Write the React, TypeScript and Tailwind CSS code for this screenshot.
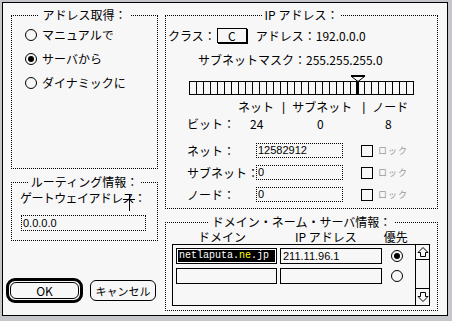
import type { ReactNode } from "react";

const bg = "bg-[#f7f7f7]";

function Radio({ on }: { on?: boolean }) {
  return (
    <span className="flex h-[12px] w-[12px] shrink-0 items-center justify-center rounded-full border border-black bg-[#f7f7f7]">
      {on && <span className="h-[6px] w-[6px] rounded-full bg-black" />}
    </span>
  );
}

function Group({
  title,
  className,
  children,
}: {
  title: string;
  className?: string;
  children?: ReactNode;
}) {
  return (
    <div className={`border border-dotted border-black ${className ?? ""}`}>
      <div className="-mt-[8px] flex h-[14px] justify-center">
        <span className={`${bg} px-[3px] text-[12px] leading-[14px]`}>{title}</span>
      </div>
      {children}
    </div>
  );
}

function Slider() {
  const lines = Array.from({ length: 33 }, (_, i) => 1 + i * 7);
  return (
    <svg width="227" height="24" viewBox="0 0 227 24">
      <rect x="1" y="10" width="225" height="14" fill="#f7f7f7" />
      {lines.map((x) => (
        <rect key={x} x={x} y="10" width="1" height="14" fill="#000" />
      ))}
      <rect x="1" y="10" width="225" height="1" fill="#000" />
      <rect x="1" y="23" width="225" height="1" fill="#000" />
      <rect x="168" y="8" width="3" height="16" fill="#000" />
      <path d="M163.5 5.5 H176.5 L170 10.5 Z" fill="#f7f7f7" stroke="#000" />
      <rect x="163" y="4" width="14" height="2" fill="#000" />
    </svg>
  );
}

function Arrow({ down }: { down?: boolean }) {
  return (
    <svg width="12" height="12" viewBox="0 0 12 12" className={down ? "rotate-180" : ""}>
      <path d="M6 1.5 L11 6.5 H8.5 V10.5 H3.5 V6.5 H1 Z" fill="#f7f7f7" stroke="#000" />
    </svg>
  );
}

function FieldRow({ label, value }: { label: string; value: string }) {
  return (
    <div className="flex h-[15px] items-center pl-[21px]">
      <span className="w-[69px] whitespace-nowrap text-[12px] leading-[14px]">{label}</span>
      <span className="flex h-[15px] w-[87px] items-center border border-dotted border-black pl-[1px] font-['Liberation_Sans',sans-serif] text-[11px] leading-[13px]">
        {value}
      </span>
      <span className="ml-[18px] h-[12px] w-[12px] border border-black" />
      <span className="ml-[5px] text-[9px] leading-[12px] tracking-[1px] text-[#9a9a9a]">ロック</span>
    </div>
  );
}

export default function App() {
  return (
    <div className="h-[321px] w-[452px] overflow-hidden bg-[#c4c6ca] pl-[2px] pt-[2px] font-['Noto_Sans_CJK_JP','Noto_Sans',sans-serif] text-black">
      <div className={`flex h-[314px] w-[446px] gap-[7px] border border-black ${bg} pl-[8px]`}>
        {/* left column */}
        <div className="flex w-[147px] flex-col pt-[12px]">
          <Group title="アドレス取得：" className="h-[154px]">
            <div className="mt-[6px] flex flex-col gap-[10px] pl-[13px] text-[12px] leading-[14px]">
              <div className="flex h-[14px] items-center gap-[5px]">
                <Radio />
                <span>マニュアルで</span>
              </div>
              <div className="flex h-[14px] items-center gap-[5px]">
                <Radio on />
                <span>サーバから</span>
              </div>
              <div className="flex h-[14px] items-center gap-[5px]">
                <Radio />
                <span>ダイナミックに</span>
              </div>
            </div>
          </Group>

          <Group title="ルーティング情報：" className="mt-[13px] h-[59px]">
            <div className="relative mt-[2px] pl-[8px] text-[12px] leading-[14px] tracking-[-0.6px]">
              ゲートウェイアドレス：
              <svg
                width="12"
                height="17"
                viewBox="0 0 12 17"
                className="absolute left-[111px] top-[3px]"
              >
                <rect x="0" y="5" width="12" height="1" fill="#000" />
                <rect x="6" y="0" width="1" height="17" fill="#000" />
              </svg>
            </div>
            <div className="ml-[9px] mt-[10px] flex h-[16px] w-[125px] items-center border border-dotted border-black pl-[1px] font-['Liberation_Sans',sans-serif] text-[11px]">
              0.0.0.0
            </div>
          </Group>

          <div className="-ml-[5px] mt-[37px] flex items-center gap-[7px] text-[12px] leading-[14px]">
            <div className="h-[25px] w-[77px] rounded-[9px] border-[3px] border-black p-[1px]">
              <div className="flex h-full w-full items-center justify-center rounded-[6px] border border-black">
                OK
              </div>
            </div>
            <div className="flex h-[21px] w-[66px] items-center justify-center rounded-[6px] border border-black text-[11px]">
              キャンセル
            </div>
          </div>
        </div>

        {/* right column */}
        <div className="flex w-[273px] flex-col pt-[12px] text-[12px] leading-[14px]">
          <Group title="IP アドレス：" className="h-[194px]">
            <div className="mt-[6px] flex h-[15px] items-center pl-[2px]">
              <span>クラス：</span>
              <span className="ml-[1px] flex h-[15px] w-[30px] items-center justify-center border border-black shadow-[1px_1px_0_#000]">
                C
              </span>
              <span className="ml-[9px]">アドレス：192.0.0.0</span>
            </div>
            <div className="mt-[10px] pl-[32px]">サブネットマスク：255.255.255.0</div>
            <div className="mt-[4px] flex pl-[22px]">
              <Slider />
            </div>
            <div className="mt-[5px] flex items-center pl-[72px]">
              <span>ネット</span>
              <span className="ml-[8px] font-['Liberation_Sans',sans-serif]">|</span>
              <span className="ml-[7px]">サブネット</span>
              <span className="ml-[10px] font-['Liberation_Sans',sans-serif]">|</span>
              <span className="ml-[7px]">ノード</span>
            </div>
            <div className="mt-[3px] flex items-center pl-[21px]">
              <span className="w-[62px]">ビット：</span>
              <span className="w-[68px] pl-[1px]">24</span>
              <span className="w-[68px]">0</span>
              <span>8</span>
            </div>
            <div className="mt-[12px] flex flex-col gap-[7px]">
              <FieldRow label="ネット：" value="12582912" />
              <FieldRow label="サブネット：" value="0" />
              <FieldRow label="ノード：" value="0" />
            </div>
          </Group>

          <Group title="ドメイン・ネーム・サーバ情報：" className="mt-[13px] h-[89px]">
            <div className="mt-[1px] flex h-[14px] items-center pl-[32px]">
              <span>ドメイン</span>
              <span className="ml-[49px]">IP アドレス</span>
              <span className="ml-[27px]">優先</span>
            </div>
            <div className="ml-[6px] flex h-[62px] w-[258px] border border-black">
              <div className="flex flex-1 flex-col gap-[4px] pl-[3px] pt-[3px]">
                <div className="flex items-center">
                  <div className="h-[16px] w-[101px] bg-black p-[1px]">
                    <div className="flex h-full items-center border border-white pl-[1px] font-['Liberation_Mono',monospace] text-[10px] leading-[12px] text-white">
                      netlaputa.<span className="text-[#ffff00]">ne</span>.jp
                    </div>
                  </div>
                  <div className="ml-[3px] flex h-[16px] w-[102px] items-center border border-black pl-[2px] font-['Liberation_Sans',sans-serif] text-[11px]">
                    211.11.96.1
                  </div>
                  <span className="ml-[9px]">
                    <Radio on />
                  </span>
                </div>
                <div className="flex items-center">
                  <div className="h-[16px] w-[101px] border border-black" />
                  <div className="ml-[3px] h-[16px] w-[102px] border border-black" />
                  <span className="ml-[9px]">
                    <Radio />
                  </span>
                </div>
              </div>
              <div className="flex w-[14px] flex-col border-l border-black">
                <div className="flex h-[15px] items-center justify-center border-b border-black">
                  <Arrow />
                </div>
                <div className="flex-1" />
                <div className="flex h-[17px] items-center justify-center border-t border-black">
                  <Arrow down />
                </div>
              </div>
            </div>
          </Group>
        </div>
      </div>
    </div>
  );
}
